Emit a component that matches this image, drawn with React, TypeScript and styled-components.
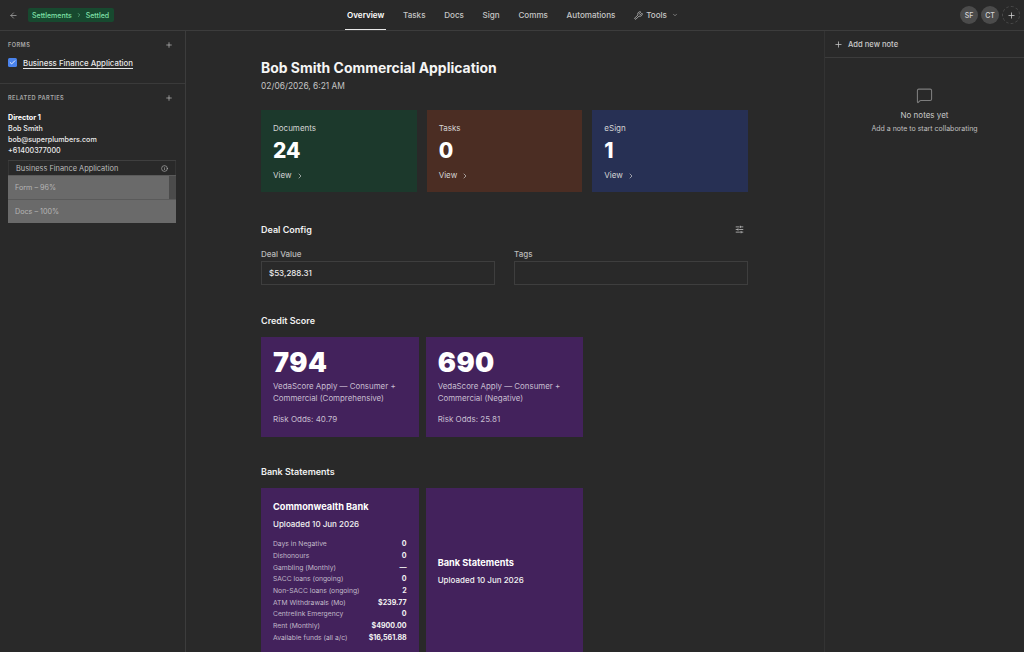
import React from "react";
import styled, { createGlobalStyle } from "styled-components";
import { ArrowLeft, ChevronRight, ChevronDown, Plus, Info, Wrench, MessageSquare, SlidersHorizontal, Check } from "lucide-react";

const Global = createGlobalStyle`
  * { box-sizing: border-box; }
  html, body { margin: 0; height: 100%; background: #292929; overflow: hidden; }
  body { font-family: Inter, "Liberation Sans", sans-serif; color: #e6e6e6; }
`;

const Page = styled.div`
  width: 1024px; height: 652px; display: flex; flex-direction: column; overflow: hidden; background: #292929;
`;
const TopBar = styled.header`
  height: 31px; flex: none; display: grid; grid-template-columns: 1fr auto 1fr; align-items: stretch;
  border-bottom: 1px solid #3c3c3c; padding: 0 4px 0 9px;
`;
const Crumbs = styled.div`display: flex; align-items: center; gap: 10px; color: #a8a8a8;`;
const Pill = styled.div`
  height: 14px; padding: 0 5px 0 4px; background: #17492f; border-radius: 2px; color: #7fe0a8; font-size: 7px; font-weight: 500;
  display: flex; align-items: center; gap: 4px;
`;
const Tabs = styled.nav`display: flex; align-items: stretch; gap: 14.67px; margin-left: -2px; margin-right: 2px;`;
const Tab = styled.div<{ $active?: boolean }>`
  display: flex; align-items: center; gap: 3px; padding: 1px 2px 0; font-size: 8.1px; font-weight: ${p => (p.$active ? 600 : 500)};
  color: ${p => (p.$active ? "#fff" : "#c6c6c6")}; border-bottom: 1px solid ${p => (p.$active ? "#e8e8e8" : "transparent")};
`;
const TabCaret = styled(ChevronDown)`margin-left: 2px;`;
const Avatars = styled.div`display: flex; justify-content: flex-end; align-items: center; gap: 3px;`;
const Avatar = styled.div<{ $dashed?: boolean }>`
  width: 18px; height: 18px; border-radius: 50%; display: flex; align-items: center; justify-content: center;
  font-size: 7px; font-weight: 500; color: #d6d6d6;
  background: ${p => (p.$dashed ? "transparent" : "#4b4b4b")};
  border: ${p => (p.$dashed ? "1px dashed #4c4c4c" : "none")};
`;
const Body = styled.div`flex: 1; display: flex; min-height: 0;`;
const Sidebar = styled.aside`width: 186px; flex: none; border-right: 1px solid #3c3c3c;`;
const SideSection = styled.section<{ $divided?: boolean }>`
  padding: 8px 12px 0 8px; border-bottom: ${p => (p.$divided ? "1px solid #3a3a3a" : "none")};
  height: ${p => (p.$divided ? "53px" : "auto")}; width: 185px;
`;
const SideHead = styled.div`
  display: flex; justify-content: space-between; align-items: center; height: 12px;
  font-size: 5.6px; font-weight: 600; letter-spacing: 0.45px; color: #a9a9a9;
`;
const FormRow = styled.div`display: flex; align-items: center; gap: 6px; margin-top: 6.5px;`;
const CheckBox = styled.div`
  width: 9px; height: 9px; background: #4a83ec; border-radius: 1.5px; display: flex; align-items: center; justify-content: center; color: #fff;
`;
const FormLink = styled.span`font-size: 7.85px; font-weight: 500; color: #e8e8e8; text-decoration: underline; text-underline-offset: 2px;`;
const Contact = styled.div`margin-top: 8px; font-size: 7.15px; line-height: 11.1px; font-weight: 500; color: #ececec;`;
const ContactName = styled.div`font-weight: 700; color: #fff;`;
const Progress = styled.div`margin-top: 4px; width: 168px; border-top: 1px solid #3f3f3f;`;
const ProgressHead = styled.div`
  height: 14px; display: flex; justify-content: space-between; align-items: center; padding: 1px 7px 0 7px; font-size: 7.4px; color: #bdbdbd;
  border-left: 1px solid #353535; border-right: 1px solid #353535;
`;
const ProgressRow = styled.div<{ $pct: number }>`
  height: 24px; display: flex; align-items: center; padding-left: 7px; font-size: 7.2px; color: #b5b5b5; background: #4b4b4b; position: relative;
  border-top: 1px solid #5a5a5a;
`;
const ProgressFill = styled.div`position: absolute; left: 0; top: 0; bottom: 0; background: #6a6a6a;`;
const ProgressLabel = styled.span`position: relative;`;
const Main = styled.main`flex: 1; padding: 27px 76px 0 75px; min-width: 0;`;
const Title = styled.h1`margin: 0; font-size: 13.95px; line-height: 20px; font-weight: 700; color: #f5f5f5;`;
const DateLine = styled.div`margin-top: 2px; font-size: 8.4px; line-height: 12px; color: #c4c4c4;`;
const Grid = styled.div<{ $gap: number; $mt?: number }>`
  display: grid; grid-template-columns: repeat(3, 1fr); gap: ${p => p.$gap}px; margin-top: ${p => p.$mt ?? 0}px;
`;
const StatCard = styled.div<{ $bg: string }>`
  height: 82px; background: ${p => p.$bg}; padding: 13px 11px 0 12px; color: #d5d5d5;
`;
const StatLabel = styled.div`font-size: 8px; line-height: 11px;`;
const StatNum = styled.div`font-size: 21px; line-height: 24px; font-weight: 800; color: #fff; margin-top: 4.5px;`;
const ViewLink = styled.div`display: flex; align-items: center; gap: 4px; margin-top: 7.5px; font-size: 8px; line-height: 11px;`;
const SectionHead = styled.div<{ $mt: number }>`
  display: flex; justify-content: space-between; align-items: center; margin-top: ${p => p.$mt}px; height: 12px;
  font-size: 9px; font-weight: 600; color: #f0f0f0; padding-right: 4px;
`;
const Fields = styled.div`display: grid; grid-template-columns: 234px 234px; column-gap: 19px; margin-top: 14px;`;
const Field = styled.div`display: flex; flex-direction: column; gap: 1px;`;
const FieldLabel = styled.label`font-size: 8px; line-height: 11px; color: #bbb; font-weight: 500;`;
const FieldBox = styled.div`
  height: 24px; border: 1px solid #3e3e3e; padding: 0 7px; display: flex; align-items: center; font-size: 8px; font-weight: 500; color: #eee;
`;
const PurpleCard = styled.div`background: #43225c; color: #c7bed0;`;
const ScoreCard = styled(PurpleCard)`height: 100px; padding: 11px 11px 0 12px;`;
const Score = styled.div`font-size: 27px; line-height: 30px; font-weight: 900; color: #fff; letter-spacing: 0.5px;`;
const ScoreDesc = styled.div`margin-top: 3px; font-size: 7.9px; line-height: 11.7px; width: 130px;`;
const Odds = styled.div`margin-top: 10px; font-size: 8px; line-height: 11px;`;
const BankCard = styled(PurpleCard)`height: 170px; padding: 13px 12px 0 12px;`;
const BankCenter = styled(PurpleCard)`height: 170px; padding: 0 12px 4px; display: flex; flex-direction: column; justify-content: center;`;
const BankName = styled.div`font-size: 9.2px; line-height: 12px; font-weight: 700; color: #fff;`;
const Uploaded = styled.div`margin-top: 5px; font-size: 8px; line-height: 12px; font-weight: 500; color: #f2f2f2;`;
const Metrics = styled.div`margin-top: 8px;`;
const Metric = styled.div`
  display: flex; justify-content: space-between; align-items: center; height: 11.7px; font-size: 6.75px; color: #c0b8c8;
`;
const MetricVal = styled.span`font-weight: 700; color: #f2f2f2; font-size: 7.1px;`;
const Notes = styled.aside`width: 200px; flex: none; border-left: 1px solid #333;`;
const NotesHead = styled.div`
  height: 27px; display: flex; align-items: center; gap: 5px; padding-left: 9px; border-bottom: 1px solid #3c3c3c;
  font-size: 7.6px; font-weight: 500; color: #c9c9c9;
`;
const Empty = styled.div`display: flex; flex-direction: column; align-items: center; margin-top: 29px; color: #7d7d7d;`;
const EmptyTitle = styled.div`margin-top: 6px; font-size: 8px; line-height: 11px; color: #c8c8c8;`;
const EmptySub = styled.div`margin-top: 2px; font-size: 7px; line-height: 11px; color: #c0c0c0;`;

const stats = [
  { label: "Documents", n: "24", bg: "#1c392c" },
  { label: "Tasks", n: "0", bg: "#4b2d23" },
  { label: "eSign", n: "1", bg: "#273054" },
];
const scores = [
  { n: "794", d: "VedaScore Apply — Consumer + Commercial (Comprehensive)", o: "Risk Odds: 40.79" },
  { n: "690", d: "VedaScore Apply — Consumer + Commercial (Negative)", o: "Risk Odds: 25.81" },
];
const metrics = [
  ["Days in Negative", "0"], ["Dishonours", "0"], ["Gambling (Monthly)", "—"], ["SACC loans (ongoing)", "0"],
  ["Non-SACC loans (ongoing)", "2"], ["ATM Withdrawals (Mo)", "$239.77"], ["Centrelink Emergency", "0"],
  ["Rent (Monthly)", "$4900.00"], ["Available funds (all a/c)", "$16,561.88"],
];

export default function App() {
  return (
    <Page>
      <Global />
      <TopBar>
        <Crumbs>
          <ArrowLeft size={9} />
          <Pill>Settlements <ChevronRight size={6} /> Settled</Pill>
        </Crumbs>
        <Tabs>
          <Tab $active>Overview</Tab>
          <Tab>Tasks</Tab>
          <Tab>Docs</Tab>
          <Tab>Sign</Tab>
          <Tab>Comms</Tab>
          <Tab>Automations</Tab>
          <Tab><Wrench size={9} /> Tools <TabCaret size={6} /></Tab>
        </Tabs>
        <Avatars>
          <Avatar>SF</Avatar>
          <Avatar>CT</Avatar>
          <Avatar $dashed><Plus size={9} /></Avatar>
        </Avatars>
      </TopBar>
      <Body>
        <Sidebar>
          <SideSection $divided>
            <SideHead>FORMS <Plus size={8} color="#c4c4c4" /></SideHead>
            <FormRow>
              <CheckBox><Check size={7} strokeWidth={3} /></CheckBox>
              <FormLink>Business Finance Application</FormLink>
            </FormRow>
          </SideSection>
          <SideSection>
            <SideHead>RELATED PARTIES <Plus size={8} color="#c4c4c4" /></SideHead>
            <Contact>
              <ContactName>Director 1</ContactName>
              <div>Bob Smith</div>
              <div>bob@superplumbers.com</div>
              <div>+61400377000</div>
            </Contact>
            <Progress>
              <ProgressHead>Business Finance Application <Info size={7} /></ProgressHead>
              <ProgressRow $pct={96}>
                <ProgressFill style={{ width: "96%" }} />
                <ProgressLabel>Form – 96%</ProgressLabel>
              </ProgressRow>
              <ProgressRow $pct={100}>
                <ProgressFill style={{ width: "100%" }} />
                <ProgressLabel>Docs – 100%</ProgressLabel>
              </ProgressRow>
            </Progress>
          </SideSection>
        </Sidebar>
        <Main>
          <Title>Bob Smith Commercial Application</Title>
          <DateLine>02/06/2026, 6:21 AM</DateLine>
          <Grid $gap={10} $mt={18}>
            {stats.map(s => (
              <StatCard key={s.label} $bg={s.bg}>
                <StatLabel>{s.label}</StatLabel>
                <StatNum>{s.n}</StatNum>
                <ViewLink>View <ChevronRight size={8} /></ViewLink>
              </StatCard>
            ))}
          </Grid>
          <SectionHead $mt={31}>Deal Config <SlidersHorizontal size={9} color="#c8c8c8" /></SectionHead>
          <Fields>
            <Field><FieldLabel>Deal Value</FieldLabel><FieldBox>$53,288.31</FieldBox></Field>
            <Field><FieldLabel>Tags</FieldLabel><FieldBox /></Field>
          </Fields>
          <SectionHead $mt={29}>Credit Score</SectionHead>
          <Grid $gap={7} $mt={11}>
            {scores.map(s => (
              <ScoreCard key={s.n}>
                <Score>{s.n}</Score>
                <ScoreDesc>{s.d}</ScoreDesc>
                <Odds>{s.o}</Odds>
              </ScoreCard>
            ))}
          </Grid>
          <SectionHead $mt={28}>Bank Statements</SectionHead>
          <Grid $gap={7} $mt={11}>
            <BankCard>
              <BankName>Commonwealth Bank</BankName>
              <Uploaded>Uploaded 10 Jun 2026</Uploaded>
              <Metrics>
                {metrics.map(([k, v]) => (
                  <Metric key={k}><span>{k}</span><MetricVal>{v}</MetricVal></Metric>
                ))}
              </Metrics>
            </BankCard>
            <BankCenter>
              <BankName>Bank Statements</BankName>
              <Uploaded>Uploaded 10 Jun 2026</Uploaded>
            </BankCenter>
          </Grid>
        </Main>
        <Notes>
          <NotesHead><Plus size={9} /> Add new note</NotesHead>
          <Empty>
            <MessageSquare size={17} strokeWidth={1.5} />
            <EmptyTitle>No notes yet</EmptyTitle>
            <EmptySub>Add a note to start collaborating</EmptySub>
          </Empty>
        </Notes>
      </Body>
    </Page>
  );
}
